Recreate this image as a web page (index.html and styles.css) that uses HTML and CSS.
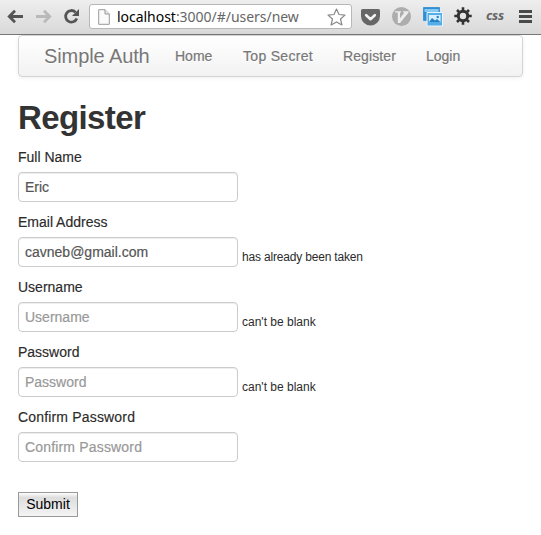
FILE: index.html
```
<!DOCTYPE html>
<html lang="en">
<head>
<meta charset="utf-8">
<title>Simple Auth</title>
<link rel="stylesheet" href="styles.css">
</head>
<body>
<header class="toolbar">
  <svg class="controls" width="89" height="34" viewBox="0 0 89 34" fill="none">
    <g stroke="#555" stroke-width="2.8">
      <path d="M9 16.5H23M15 10.8L9.3 16.5L15 22.2"/>
      <path d="M36 16.5H50M44 10.8L49.7 16.5L44 22.2" stroke="#b9b9b9"/>
      <path d="M75.5 12.2A5.8 5.8 0 1 0 76.8 18.5"/>
    </g>
    <path d="M79 9V16H72Z" fill="#555"/>
  </svg>
  <div class="address">
    <svg width="12" height="16" viewBox="0 0 12 16"><path d="M.7.7H7L11.3 5V15.3H.7Z" fill="#fafafa" stroke="#999"/><path d="M7 .7V5H11.3" fill="#e8e8e8" stroke="#999"/></svg>
    <span class="url">localhost<span class="path">:3000/#/users/new</span></span>
    <svg class="star" width="19" height="18" viewBox="0 0 19 18"><path d="M9.5 1L12 6.5L18 7.1L13.5 11L14.9 17L9.5 13.9L4.1 17L5.5 11L1 7.1L7 6.5Z" fill="#fff" stroke="#888" stroke-width="1.2" stroke-linejoin="round"/></svg>
  </div>
  <div class="extensions">
    <svg width="19" height="17" viewBox="0 0 19 17"><path d="M1.5 0H17.5Q19 0 19 1.5V7A9.5 9.5 0 0 1 0 7V1.5Q0 0 1.5 0Z" fill="#666"/><path d="M5.2 6.2L9.5 10.2L13.8 6.2" fill="none" stroke="#f3f3f3" stroke-width="2.6" stroke-linecap="round" stroke-linejoin="round"/></svg>
    <svg class="vimeo" width="19" height="19" viewBox="0 0 19 19"><circle cx="9.5" cy="9.5" r="9.5" fill="#adadad"/><path d="M3 4.2H9V5.4H8V11.2L12.6 5.4H11V4.2H16.6V5.4L8 16H5.8V5.4H3Z" fill="#ededed"/></svg>
    <svg class="pictures" width="20" height="20" viewBox="0 0 20 20"><path d="M.5.5H16.5V13.5H.5Z" fill="#2f8ed6" stroke="#4395d0"/><path d="M1.5 2H15.5V5H1.5Z" fill="#87caf4"/><path d="M4 5.5H19.5V19H4Z" fill="#55aee8" stroke="#e7f5ff"/><path d="M6 8H17.5V15H6Z" fill="#d6efff"/><path d="M6 15L9 11L12 13.5L14 12L17.5 15Z" fill="#2680c4"/><circle cx="14.7" cy="10" r="1.2" fill="#2680c4"/></svg>
    <svg class="gear" width="18" height="18" viewBox="-9 -9 18 18"><circle r="4.7" fill="none" stroke="#333" stroke-width="3"/><path d="M0-8.7V-5M0 5V8.7M-8.7 0H-5M5 0H8.7M-6-6L-4-4M6 6L4 4M-6 6L-4 4M6-6L4-4" stroke="#333" stroke-width="2.6"/></svg>
    <span class="css">css</span>
    <svg class="menu" width="13" height="13" viewBox="0 0 13 13"><path d="M0 1.5H13M0 6.5H13M0 11.5H13" stroke="#4a4a4a" stroke-width="2.8"/></svg>
  </div>
</header>
<main class="container">
  <nav class="navbar">
    <a class="brand">Simple Auth</a>
    <a class="home">Home</a>
    <a class="secret">Top Secret</a>
    <a class="register">Register</a>
    <a class="login">Login</a>
  </nav>
  <h1>Register</h1>
  <form>
    <label for="name">Full Name</label>
    <div class="field"><input id="name" type="text" value="Eric"></div>
    <label for="email">Email Address</label>
    <div class="field"><input id="email" type="text" value="cavneb@gmail.com"><small class="taken">has already been taken</small></div>
    <label for="username">Username</label>
    <div class="field"><input id="username" type="text" placeholder="Username"><small>can't be blank</small></div>
    <label for="password">Password</label>
    <div class="field"><input id="password" type="password" placeholder="Password"><small>can't be blank</small></div>
    <label class="confirm" for="confirm">Confirm Password</label>
    <div class="field"><input class="confirm" id="confirm" type="password" placeholder="Confirm Password"></div>
    <button type="button">Submit</button>
  </form>
</main>
</body>
</html>
```
FILE: styles.css
```
* { box-sizing: border-box; }
body {
  margin: 0;
  background: #fff;
  color: #2b2b2b;
  font: 14px/20px "Liberation Sans", Arial, sans-serif;
}
svg { display: block; flex: none; }
.toolbar {
  display: flex;
  height: 35px;
  border-bottom: 1px solid #777;
  background: linear-gradient(#eee, #d9d9d9);
}
.address {
  display: flex;
  align-items: center;
  width: 263px;
  height: 25px;
  margin-top: 4px;
  padding: 0 5px 0 8px;
  border: 1px solid #b7b7b7;
  border-radius: 3px;
  background: #fff;
}
.url {
  margin-left: 7px;
  color: #000;
  font: 14px/20px "Noto Sans", sans-serif;
  letter-spacing: -.03px;
  white-space: nowrap;
}
.path { color: #666; }
.star { margin-left: auto; }
.extensions { display: flex; flex: 1; align-items: flex-start; padding: 9px 0 0 9px; }
.vimeo { margin: -2px 0 0 12px; }
.pictures { margin: -2px 0 0 12px; }
.gear { margin: -2px 0 0 11px; }
.css {
  width: 18px;
  margin: -4px 0 0 14px;
  color: #666;
  font: italic bold 13px/20px "Noto Sans", sans-serif;
  letter-spacing: -.2px;
}
.menu { margin: 1px 0 0 15px; }
.container { width: 505px; margin-left: 18px; }
.navbar {
  display: flex;
  height: 42px;
  padding-left: 25px;
  border: 1px solid #d4d4d4;
  border-radius: 4px;
  background: linear-gradient(#fff, #f2f2f2);
  box-shadow: 0 1px 4px rgba(0, 0, 0, .065);
  color: #777;
  line-height: 41px;
  text-shadow: 0 1px 0 #fff;
  white-space: nowrap;
  -webkit-text-stroke: .2px #777;
}
.brand {
  width: 131px;
  font-size: 20px;
  letter-spacing: -.1px;
  -webkit-text-stroke: 0;
}
.home { width: 68px; }
.secret { width: 100px; letter-spacing: .3px; }
.register { width: 83px; letter-spacing: .1px; }
h1 {
  margin: 21px 0 9px;
  color: #333;
  font-size: 33px;
  line-height: 40px;
  letter-spacing: -.6px;
}
label { display: block; margin-bottom: 5px; -webkit-text-stroke: .15px; }
.confirm { letter-spacing: .17px; }
.field { display: flex; height: 30px; margin-bottom: 10px; }
input {
  width: 220px;
  height: 30px;
  padding: 4px 6px;
  border: 1px solid #ccc;
  border-radius: 4px;
  background: #fff;
  box-shadow: inset 0 1px 1px rgba(0, 0, 0, .075);
  color: #555;
  font: inherit;
  -webkit-text-stroke: .2px;
}
input::placeholder { color: #999; opacity: 1; }
small { margin: 10px 0 0 4px; font-size: 12px; line-height: 20px; }
.taken { letter-spacing: -.18px; }
button {
  display: block;
  width: 60px;
  height: 25px;
  margin-top: 30px;
  padding: 0 0 2px;
  border: 1px solid #999;
  border-radius: 0;
  background: linear-gradient(#fff, #ddd 20%, #f4f4f4);
  color: #000;
  font: inherit;
}
```
